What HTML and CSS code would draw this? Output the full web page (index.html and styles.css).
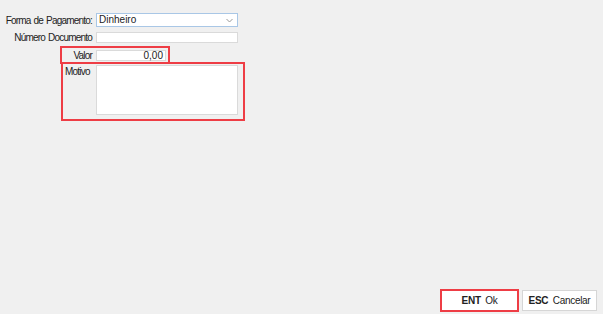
FILE: index.html
```html
<!DOCTYPE html>
<html lang="pt">
<head>
<meta charset="UTF-8">
<title>Recebimento</title>
<link rel="stylesheet" href="styles.css">
</head>
<body>

<form class="form">
  <div class="row">
    <label class="lbl">Forma de Pagamento:</label>
    <div class="select">
      <span>Dinheiro</span>
      <svg class="chev" width="7" height="5" viewBox="0 0 7 5"><path d="M0.5 1 L3.5 4 L6.5 1" fill="none" stroke="#9a9a9a" stroke-width="1"/></svg>
    </div>
  </div>

  <div class="row">
    <label class="lbl">Número Documento</label>
    <div class="input input-doc"></div>
  </div>

  <div class="row mark mark-valor">
    <label class="lbl">Valor</label>
    <div class="input input-valor">0,00</div>
  </div>

  <div class="row mark mark-motivo">
    <label class="lbl lbl-top">Motivo</label>
    <div class="textarea"></div>
  </div>
</form>

<div class="footer">
  <button type="button" class="btn btn-ok"><b>ENT</b> Ok</button>
  <button type="button" class="btn btn-cancel"><b>ESC</b> Cancelar</button>
</div>

</body>
</html>
```

FILE: styles.css
```css
html, body {
  height: 100%;
}

body {
  margin: 0;
  background-color: #f0f0f0;
  font-family: "Liberation Sans", Arial, sans-serif;
  font-size: 10px;
  color: #222;
  display: flex;
  flex-direction: column;
}

.form {
  padding: 13px 0 0 0;
}

.row {
  display: flex;
  align-items: center;
  margin-bottom: 5px;
}

.lbl {
  flex: none;
  display: flex;
  justify-content: flex-end;
  width: 84px;
  margin-left: 8px;
  margin-right: 4px;
  color: #222;
  white-space: nowrap;
  letter-spacing: -0.8px;
  word-spacing: 1px;
}

.lbl-top {
  align-self: flex-start;
  justify-content: flex-start;
  margin-top: 1px;
}

.select {
  flex: none;
  width: 137px;
  height: 12px;
  border: 1px solid #a9c7e6;
  background-color: #fff;
  padding: 0 1px 0 2px;
  display: flex;
  align-items: center;
  justify-content: space-between;
  line-height: 12px;
}

.chev {
  margin-right: 3px;
}

.input {
  flex: none;
  height: 9px;
  border: 1px solid #dadada;
  background-color: #fff;
  line-height: 9px;
}

.input-doc {
  width: 140px;
}

.input-valor {
  width: 66px;
  text-align: right;
  padding-right: 2px;
}

.textarea {
  flex: none;
  width: 140px;
  height: 48px;
  border: 1px solid #dadada;
  background-color: #fff;
}

/* highlighted rows */
.mark {
  width: fit-content;
  margin-left: 60px;
  border: 2px solid #ee3d45;
  margin-bottom: 0;
}

.mark .lbl {
  width: 30px;
  margin-left: 0;
}

.mark-valor {
  padding: 2px 2px 1px 0;
  margin-top: -2px;
}

.mark-motivo {
  padding: 1px 5px 4px 0;
  margin-top: -2px;
  margin-left: 61px;
}

.mark-motivo .lbl {
  margin-left: 2px;
  width: 27px;
}

.footer {
  margin-top: auto;
  display: flex;
  justify-content: flex-end;
  gap: 3px;
  padding: 0 6px 2px 0;
  align-items: flex-end;
}

.btn {
  font-family: "Liberation Sans", Arial, sans-serif;
  font-size: 10px;
  letter-spacing: -0.3px;
  color: #222;
  background-color: #fff;
  border: 1px solid #d6d6d6;
  height: 21px;
  padding: 0;
  margin-bottom: 1px;
}

.btn b {
  margin-right: 2px;
}

.btn-ok {
  width: 79px;
  height: 23px;
  border: 2px solid #ee3d45;
  margin-bottom: 0;
}

.btn-cancel {
  width: 75px;
}
```
